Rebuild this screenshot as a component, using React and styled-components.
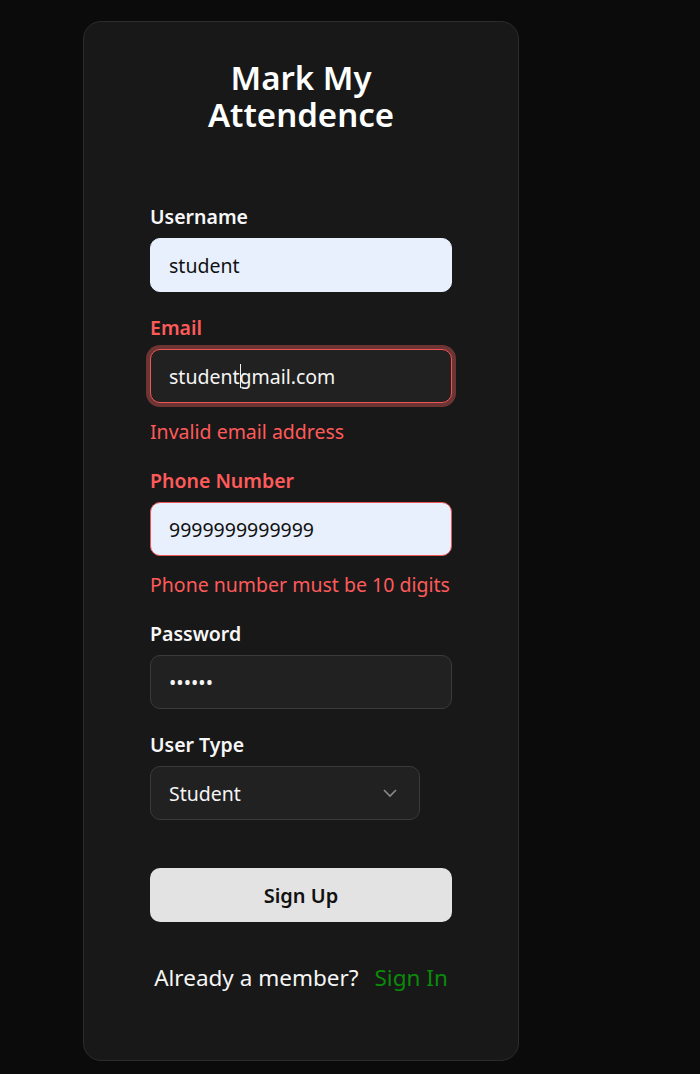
import React from 'react'
import styled, { createGlobalStyle } from 'styled-components'

const GlobalStyle = createGlobalStyle`
  html, body {
    margin: 0;
    padding: 0;
    background: #0b0b0b;
  }
  body {
    font-family: "Noto Sans", "Open Sans", sans-serif;
    color: #f5f5f5;
  }
`

const Page = styled.div`
  min-height: 1074px;
  padding: 21px 0 0 83px;
  box-sizing: border-box;
`

const Card = styled.div`
  width: 436px;
  height: 1040px;
  box-sizing: border-box;
  background: #181818;
  border: 1px solid #2c2c2c;
  border-radius: 18px;
  padding: 37px 66px 0;
  display: flex;
  flex-direction: column;
`

const Title = styled.h1`
  margin: 0 0 72px;
  text-align: center;
  font-size: 33px;
  line-height: 37px;
  font-weight: 600;
  color: #ffffff;
`

const Field = styled.div`
  display: flex;
  flex-direction: column;
  margin-bottom: ${(p) => (p.$error ? '25px' : '24px')};
`

const Label = styled.label`
  font-size: 19.5px;
  line-height: 24px;
  font-weight: 600;
  margin-bottom: 9px;
  color: ${(p) => (p.$error ? '#ff5a5a' : '#f7f7f7')};
`

const InputWrap = styled.div`
  position: relative;
  width: ${(p) => p.$width || '302px'};
`

const borderColor = (p) => {
  if (p.$error) return '#ee5555'
  if (p.$filled) return '#e8f0fe'
  return '#3a3a3a'
}

const Input = styled.input`
  display: block;
  width: 100%;
  height: 54px;
  box-sizing: border-box;
  border-radius: 10px;
  padding: 0 18px;
  font-family: inherit;
  font-size: 19.5px;
  outline: none;
  background: ${(p) => (p.$filled ? '#e8f0fe' : '#212121')};
  color: ${(p) => (p.$filled ? '#111' : '#f5f5f5')};
  border: 1px solid ${borderColor};
  box-shadow: ${(p) => (p.$focus ? '0 0 0 4px #6e3434' : 'none')};
`

const Caret = styled.span`
  position: absolute;
  top: 15px;
  width: 1px;
  height: 24px;
  background: #f0f0f0;
`

const Select = styled.select`
  display: block;
  width: 100%;
  height: 54px;
  box-sizing: border-box;
  border-radius: 10px;
  padding: 0 18px;
  font-family: inherit;
  font-size: 19.5px;
  appearance: none;
  background: #212121;
  color: #f5f5f5;
  border: 1px solid #3a3a3a;
  outline: none;
`

const Chevron = styled.svg`
  position: absolute;
  right: 23px;
  top: 22px;
  pointer-events: none;
`

const ErrorText = styled.div`
  margin-top: 17px;
  font-size: 19.5px;
  line-height: 24px;
  color: #ff5a5a;
`

const Button = styled.button`
  margin-top: 24px;
  width: 302px;
  height: 54px;
  border: none;
  border-radius: 10px;
  background: #e3e3e3;
  color: #111;
  font-family: inherit;
  font-size: 20px;
  font-weight: 600;
`

const Footer = styled.div`
  margin-top: 42px;
  display: flex;
  justify-content: center;
  gap: 16px;
  font-size: 22.5px;
  line-height: 28px;
  color: #f5f5f5;
`

const SignIn = styled.a`
  color: #0a8a0a;
  text-decoration: none;
`

export default function App() {
  return (
    <Page>
      <GlobalStyle />
      <Card>
        <Title>
          Mark My
          <br />
          Attendence
        </Title>

        <Field>
          <Label>Username</Label>
          <InputWrap>
            <Input $filled type="text" value="student" readOnly />
          </InputWrap>
        </Field>

        <Field $error>
          <Label $error>Email</Label>
          <InputWrap>
            <Input $error $focus type="text" value="studentgmail.com" readOnly />
            <Caret style={{ left: 90 }} />
          </InputWrap>
          <ErrorText>Invalid email address</ErrorText>
        </Field>

        <Field $error>
          <Label $error>Phone Number</Label>
          <InputWrap>
            <Input $filled $error type="text" value="9999999999999" readOnly />
          </InputWrap>
          <ErrorText>Phone number must be 10 digits</ErrorText>
        </Field>

        <Field>
          <Label>Password</Label>
          <InputWrap>
            <Input type="password" value="123456" readOnly />
          </InputWrap>
        </Field>

        <Field>
          <Label>User Type</Label>
          <InputWrap $width="270px">
            <Select defaultValue="student">
              <option value="student">Student</option>
              <option value="teacher">Teacher</option>
            </Select>
            <Chevron width="14" height="10" viewBox="0 0 14 10">
              <path d="M1 2 L7 8 L13 2" fill="none" stroke="#8a8a8a" strokeWidth="1.6" />
            </Chevron>
          </InputWrap>
        </Field>

        <Button>Sign Up</Button>

        <Footer>
          <span>Already a member?</span>
          <SignIn href="#">Sign In</SignIn>
        </Footer>
      </Card>
    </Page>
  )
}
